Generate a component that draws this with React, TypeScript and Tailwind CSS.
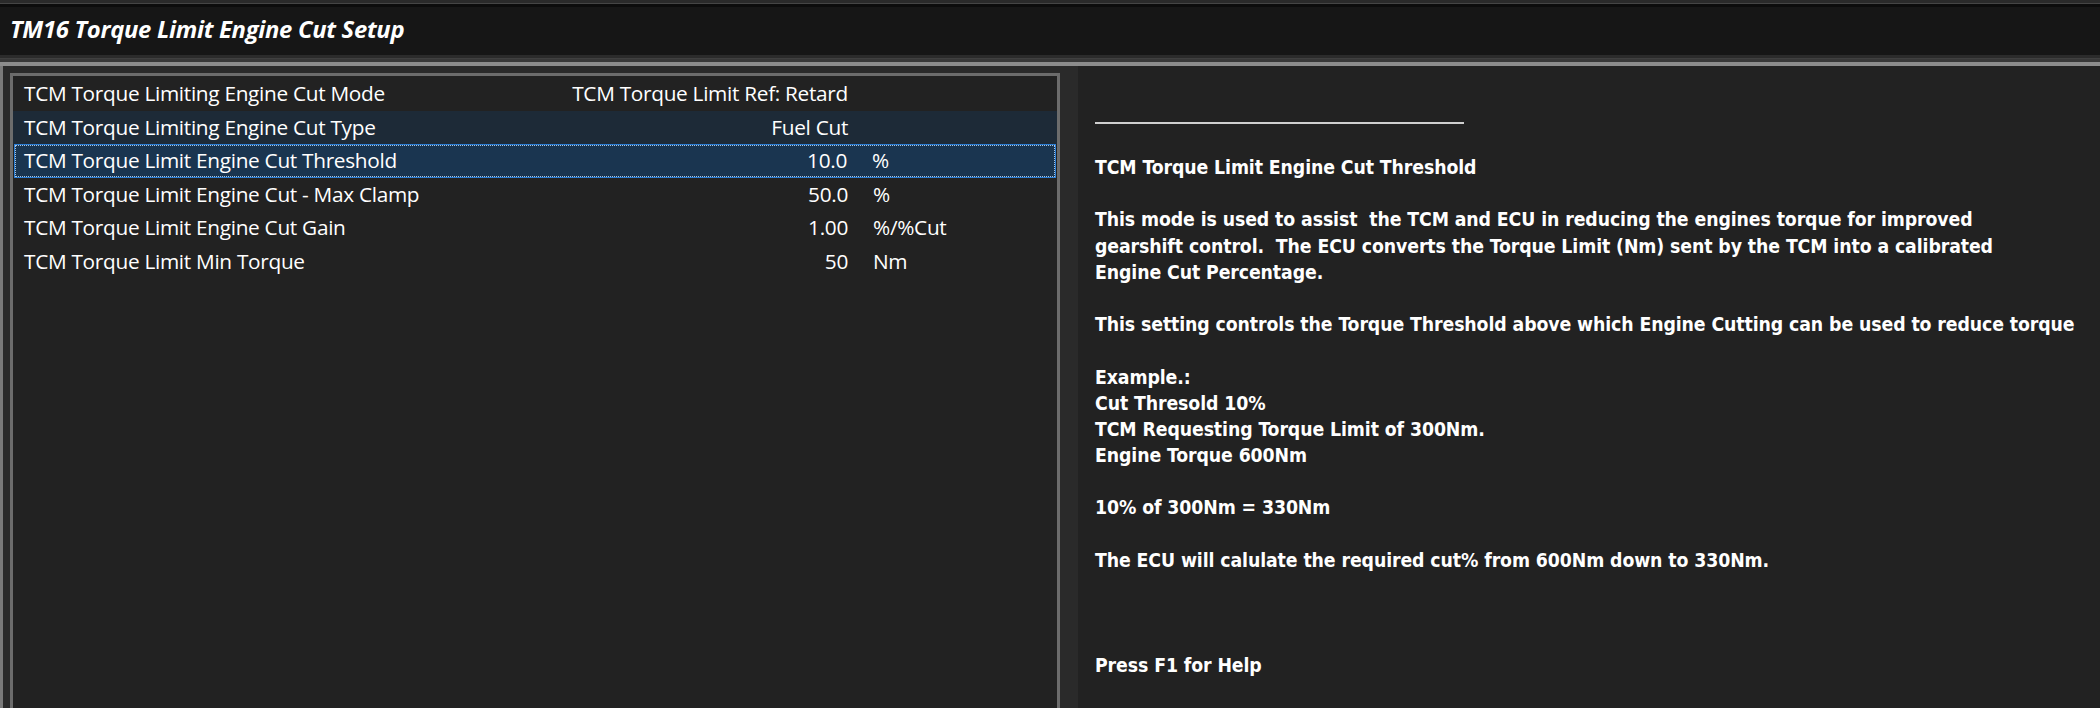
const rows = [
  { label: 'TCM Torque Limiting Engine Cut Mode', value: 'TCM Torque Limit Ref: Retard', unit: '', state: '' },
  { label: 'TCM Torque Limiting Engine Cut Type', value: 'Fuel Cut', unit: '', state: 'hover' },
  { label: 'TCM Torque Limit Engine Cut Threshold', value: '10.0', unit: '%', state: 'selected' },
  { label: 'TCM Torque Limit Engine Cut - Max Clamp', value: '50.0', unit: '%', state: '' },
  { label: 'TCM Torque Limit Engine Cut Gain', value: '1.00', unit: '%/%Cut', state: '' },
  { label: 'TCM Torque Limit Min Torque', value: '50', unit: 'Nm', state: '' },
];

const helpLines = [
  'TCM Torque Limit Engine Cut Threshold',
  '',
  'This mode is used to assist\u00a0 the TCM and ECU in reducing the engines torque for improved',
  'gearshift control.\u00a0 The ECU converts the Torque Limit (Nm) sent by the TCM into a calibrated',
  'Engine Cut Percentage.',
  '',
  'This setting controls the Torque Threshold above which Engine Cutting can be used to reduce torque',
  '',
  'Example.:',
  'Cut Thresold 10%',
  'TCM Requesting Torque Limit of 300Nm.',
  'Engine Torque 600Nm',
  '',
  '10% of 300Nm = 330Nm',
  '',
  'The ECU will calulate the required cut% from 600Nm down to 330Nm.',
  '',
  '',
  '',
  'Press F1 for Help',
];

export default function App() {
  return (
    <div className="w-[2100px] h-[708px] flex flex-col bg-[#222222] overflow-hidden text-white">
      {/* top strip */}
      <div className="h-[3px] bg-[#2a2a2a]" />
      <div className="h-[1px] bg-[#454545]" />
      <div className="h-[3px] bg-[#0c0c0c]" />

      {/* title bar */}
      <div className="h-[48px] bg-[#161616] flex items-center pl-[10px] pb-[2px]">
        <span className="font-['Open_Sans',sans-serif] italic font-bold text-[23.8px] tracking-[-0.3px] text-white">
          TM16 Torque Limit Engine Cut Setup
        </span>
      </div>
      <div className="h-[3px] bg-[#2b2b2b]" />
      <div className="h-[1px] bg-[#404040]" />
      <div className="h-[3px] bg-[#383838]" />
      <div className="h-[4px] bg-[#8c8c8c]" />

      <div className="flex flex-1 min-h-0">
        {/* left panel */}
        <div className="w-[1065px] shrink-0 flex border-l-[3px] border-[#7a7a7a] bg-[#2a2a2a] pt-[7px] pl-[7px] pr-[5px]">
          <div className="flex-1 border-t-[3px] border-l-[3px] border-r-[3px] border-[#6c6c6c] bg-[#222222] pt-[1px]">
            {rows.map((r) => (
              <div
                key={r.label}
                className={
                  'h-[33.5px] flex items-center font-["Open_Sans",sans-serif] text-[20.8px] tracking-[-0.3px] ' +
                  (r.state === 'hover'
                    ? 'bg-[#1d2a37]'
                    : r.state === 'selected'
                    ? 'bg-[#1a3550] mx-[1px] border border-[#2b7fd8] outline-1 outline-dotted outline-[#a8c4e0] -outline-offset-2'
                    : '')
                }
              >
                <span className={r.state === 'selected' ? 'pl-[9px]' : 'pl-[11px]'}>{r.label}</span>
                <span className="ml-auto w-[420px] text-right">{r.value}</span>
                <span className="w-[25px]" />
                <span className={r.state === 'selected' ? 'w-[183px]' : 'w-[184px]'}>{r.unit}</span>
              </div>
            ))}
          </div>
        </div>

        {/* splitter */}
        <div className="w-[13px] shrink-0 bg-[#2a2a2a]" />

        {/* help panel */}
        <div className="flex-1 min-w-0 bg-[#222222] pl-[17px] pt-[56px]">
          <div className="w-[369px] h-[2px] bg-[#cfcfcf]" />
          <div className="mt-[31px] font-['Liberation_Sans_Narrow','DejaVu_Sans_Condensed',sans-serif] font-bold text-[19.3px] leading-[26.2px] tracking-[-0.1px]">
            {helpLines.map((l, i) => (
              <div key={i} className="h-[26.2px] whitespace-pre">
                {l}
              </div>
            ))}
          </div>
        </div>
      </div>
    </div>
  );
}
